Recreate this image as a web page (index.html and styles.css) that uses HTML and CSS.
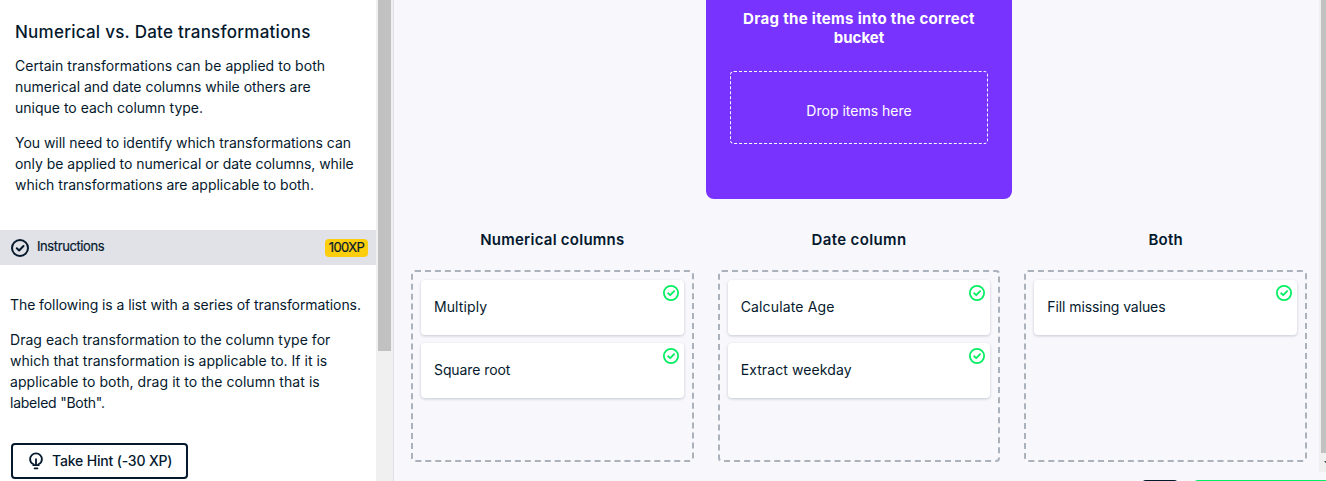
FILE: index.html
```
<!DOCTYPE html>
<html lang="en">
<head>
<meta charset="utf-8">
<title>Numerical vs. Date transformations</title>
<link rel="stylesheet" href="styles.css">
</head>
<body>
<svg class="defs" width="0" height="0">
  <symbol id="check" viewBox="0 0 18 18"><circle cx="9" cy="9" r="8" fill="none" stroke="currentColor" stroke-width="2"/><path d="M5.8 9.3l2.3 2.2 4.4-4.5" fill="none" stroke="currentColor" stroke-width="2" stroke-linecap="round" stroke-linejoin="round"/></symbol>
</svg>
<div class="app">
  <aside class="side">
    <section class="intro">
      <h1><span class="t1">Numerical vs. Date transformations</span></h1>
      <p><span class="a1">Certain transformations can be applied to both</span><br><span class="a2">numerical and date columns while others are</span><br><span class="a3">unique to each column type.</span></p>
      <p><span class="a4">You will need to identify which transformations can</span><br><span class="a5">only be applied to numerical or date columns, while</span><br><span class="a6">which transformations are applicable to both.</span></p>
    </section>
    <div class="bar">
      <svg class="bar-icon"><use href="#check"/></svg>
      <span class="bar-title">Instructions</span>
      <span class="xp">100XP</span>
    </div>
    <section class="steps">
      <p><span class="b1">The following is a list with a series of transformations.</span></p>
      <p><span class="b2">Drag each transformation to the column type for</span><br><span class="b3">which that transformation is applicable to. If it is</span><br><span class="b4">applicable to both, drag it to the column that is</span><br><span class="b5">labeled "Both".</span></p>
      <button class="hint"><svg width="14" height="18" viewBox="0 0 14 18" fill="none" stroke="currentColor" stroke-width="1.8" stroke-linecap="round"><path d="M4.4 13.2v-1C2.3 11.2 1.1 9.300 1.100 7.200a5.900 5.900 0 0 1 11.800 0c0 2.100-1.200 4-3.300 5v1z"/><path d="M7 7.200v5.500M5.600 16.300h2.800"/></svg><span>Take Hint (-30 XP)</span></button>
    </section>
  </aside>
  <div class="track"><div class="thumb"></div></div>
  <main class="board">
    <div class="source">
      <h2><span class="s1">Drag the items into the correct</span><br><span class="s2">bucket</span></h2>
      <div class="drop"><span>Drop items here</span></div>
    </div>
    <div class="columns">
      <section class="col"><h3 class="c1">Numerical columns</h3>
        <div class="bucket">
          <div class="card"><span class="k1">Multiply</span><svg><use href="#check"/></svg></div>
          <div class="card"><span class="k2">Square root</span><svg><use href="#check"/></svg></div>
        </div></section>
      <section class="col"><h3 class="c2">Date column</h3>
        <div class="bucket">
          <div class="card"><span class="k3">Calculate Age</span><svg><use href="#check"/></svg></div>
          <div class="card"><span class="k4">Extract weekday</span><svg><use href="#check"/></svg></div>
        </div></section>
      <section class="col"><h3 class="c3">Both</h3>
        <div class="bucket">
          <div class="card"><span class="k5">Fill missing values</span><svg><use href="#check"/></svg></div>
        </div></section>
    </div>
    <div class="actions"><span class="act dark"></span><span class="act green"></span></div>
  </main>
  <div class="page-track"><div class="page-thumb"></div><svg width="7" height="19" viewBox="0 0 7 19"><path d="M5 8h7l-3.5 4z" fill="#505050"/></svg></div>
</div>
</body>
</html>
```
FILE: styles.css
```
* { box-sizing: border-box; }
body { margin: 0; overflow: hidden; background: #f7f7fc; color: #05192d; font: 14px/21px Inter, "Noto Sans", sans-serif; }
h1, h2, h3, p { margin: 0; white-space: nowrap; }
.defs { display: block; height: 0; }
.app { display: flex; width: 1326px; height: 481px; overflow: hidden; }
.side { width: 376px; height: 481px; background: #fff; flex: none; overflow: hidden; }
.intro { height: 230px; padding: 20px 15px 0; }
h1 { font-size: 17px; line-height: 24px; font-weight: 500; margin-bottom: 11px; }
p { margin-bottom: 14px; }
.t1 { letter-spacing: .25px; }
.a1 { letter-spacing: .045px; }
.a2 { letter-spacing: -.02px; }
.a4, .a5 { letter-spacing: -.03px; }
.b1 { letter-spacing: -.08px; }
.b2 { letter-spacing: .03px; }
.b3 { letter-spacing: .02px; }
.b4 { letter-spacing: .06px; }
.b5 { letter-spacing: -.24px; }
.bar { height: 35px; background: #e1e1e8; display: flex; align-items: center; padding: 0 8px 0 11px; }
.bar-icon { width: 18px; height: 18px; margin-right: 8px; flex: none; }
.bar-title { font-size: 13px; line-height: 18px; margin-top: -3px; flex: 1; letter-spacing: -.4px; -webkit-text-stroke: .2px; }
.xp { width: 43px; height: 18px; border-radius: 4px; background: #fcce0d; font-size: 13px; line-height: 17px; text-align: center; letter-spacing: -.6px; -webkit-text-stroke: .2px; }
.steps { padding: 29px 10px 0; }
.hint { display: flex; align-items: center; gap: 9px; width: 177px; height: 36px; margin: 30px 0 0 1px; padding: 0 0 0 16px; border: 2px solid #05192d; border-radius: 4px; background: #fff; color: #05192d; font: 500 14px/20px Inter, sans-serif; letter-spacing: -.17px; white-space: nowrap; }
.track { width: 18px; flex: none; background: #f0f0f0; border-right: 1px solid #e1e1e8; padding-left: 2px; }
.thumb { width: 13px; height: 351px; background: #c1c1c1; }
.board { width: 925px; flex: none; padding: 0 12px 0 17px; height: 481px; }
.source { width: 306px; height: 199px; margin-left: 295px; background: #7933ff; border-radius: 0 0 8px 8px; color: #fff; text-align: center; padding: 9px 24px 0; }
h2 { font-size: 15px; line-height: 19px; font-weight: 700; }
.s1 { letter-spacing: .32px; }
.drop { height: 73px; margin-top: 24px; border: 1px dashed #fff; border-radius: 4px; display: flex; align-items: center; justify-content: center; padding-top: 6px; }
.columns { display: grid; grid-template-columns: repeat(3, 1fr); column-gap: 24px; padding-top: 30px; }
h3 { font-size: 15px; line-height: 21px; font-weight: 600; text-align: center; margin-bottom: 20px; }
.c1 { letter-spacing: .25px; }
.c2 { letter-spacing: .38px; }
.c3 { letter-spacing: .25px; }
.bucket { height: 192px; border: 2px dashed #acb2bc; border-radius: 4px; padding: 8px; display: flex; flex-direction: column; gap: 8px; }
.card { height: 55px; background: #fff; border-radius: 4px; box-shadow: 0 1px 3px rgba(5,25,45,.2); display: flex; justify-content: space-between; align-items: flex-start; padding: 5px 5px 0 13px; white-space: nowrap; }
.card span { margin-top: 11px; }
.k1, .k4 { letter-spacing: .1px; }
.k2, .k5 { letter-spacing: -.09px; }
.k3 { letter-spacing: .15px; }
.card svg { width: 16px; height: 16px; color: #03ef62; }
.actions { display: flex; margin-top: 18px; padding-left: 731px; gap: 16px; }
.act { height: 36px; flex: none; border-radius: 4px; }
.dark { width: 36px; background: #05192d; }
.green { width: 150px; background: #03ef62; }
.page-track { width: 7px; height: 472px; background: #f0f0f0; flex: none; }
.page-thumb { margin-left: 2px; height: 453px; background: #c1c1c1; }
.page-track svg { display: block; }
```
